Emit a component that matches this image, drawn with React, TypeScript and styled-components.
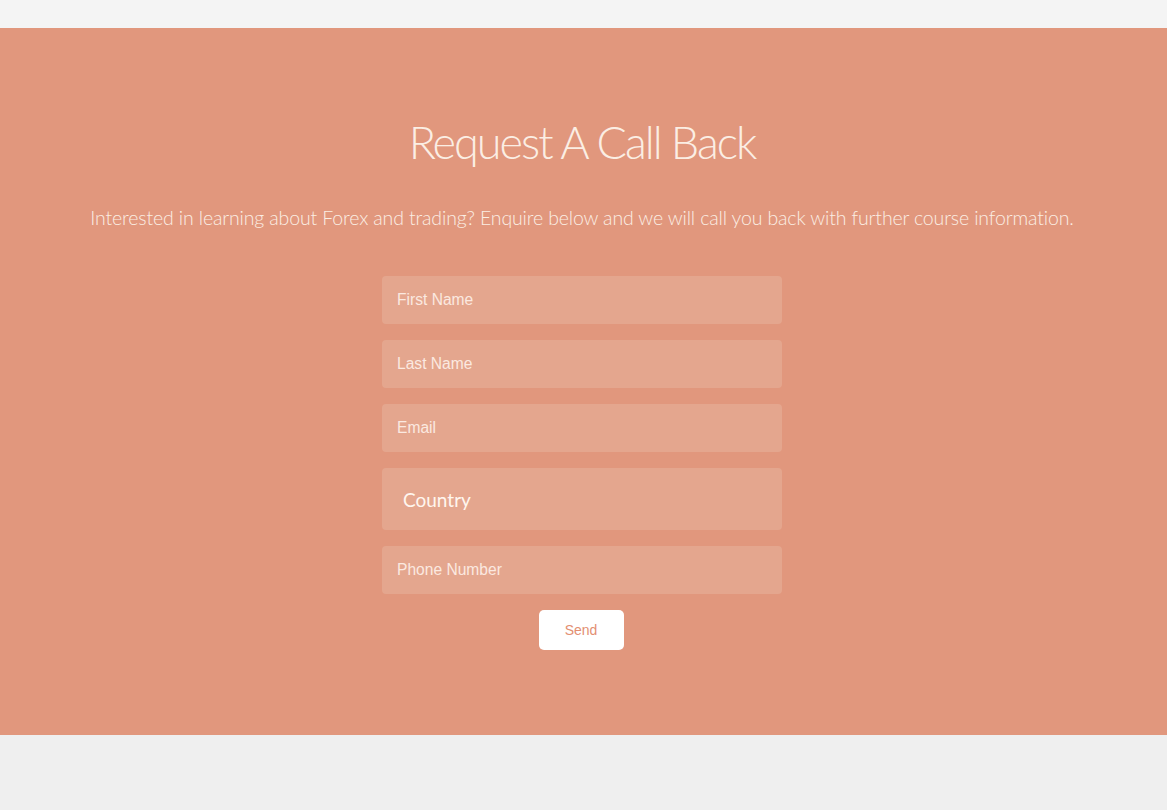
import React from "react";
import styled, { createGlobalStyle } from "styled-components";

const Global = createGlobalStyle`
  html, body { margin: 0; padding: 0; background: #efefef; }
  * { box-sizing: border-box; }
`;

const Page = styled.div`
  display: flex;
  flex-direction: column;
  min-height: 810px;
  background: #efefef;
`;

const TopBar = styled.div`
  height: 28px;
  background: #f4f4f4;
`;

const Section = styled.section`
  background: #e1977d;
  height: 707px;
  display: flex;
  flex-direction: column;
  align-items: center;
  padding: 84px 3px 0 0;
  font-family: Lato, "Open Sans", sans-serif;
`;

const Title = styled.h2`
  margin: 0;
  font-weight: 300;
  font-size: 45px;
  line-height: 60px;
  color: #fbeee4;
  letter-spacing: -2px;
`;

const Lead = styled.p`
  margin: 34px 0 0;
  font-weight: 300;
  font-size: 19.5px;
  line-height: 24px;
  letter-spacing: -0.14px;
  color: #fbeee4;
`;

const Form = styled.form`
  margin-top: 46px;
  width: 400px;
  display: flex;
  flex-direction: column;
  gap: 16px;
  align-items: center;
`;

const Field = styled.input`
  width: 400px;
  height: 48px;
  border: none;
  border-radius: 4px;
  background: #e4a68e;
  padding: 0 15px;
  font-family: "Liberation Sans", Arial, sans-serif;
  font-size: 15.6px;
  color: #fbe9e0;
  outline: none;
  &::placeholder { color: #fbe9e0; opacity: 1; }
`;

const Select = styled.div`
  width: 400px;
  height: 62px;
  border-radius: 4px;
  background: #e4a68e;
  display: flex;
  align-items: center;
  padding: 0 21px;
  font-family: Lato, "Open Sans", sans-serif;
  font-size: 19px;
  font-weight: 400;
  color: #fff6ee;
`;

const Send = styled.button`
  width: 85px;
  height: 40px;
  margin-right: 2px;
  border: none;
  border-radius: 5px;
  background: #ffffff;
  color: #e38f72;
  font-family: "Liberation Sans", Arial, sans-serif;
  font-size: 14px;
`;

export default function App() {
  return (
    <Page>
      <Global />
      <TopBar />
      <Section>
        <Title>Request A Call Back</Title>
        <Lead>
          Interested in learning about Forex and trading? Enquire below and we will call you back with further course information.
        </Lead>
        <Form onSubmit={(e) => e.preventDefault()}>
          <Field placeholder="First Name" />
          <Field placeholder="Last Name" />
          <Field placeholder="Email" />
          <Select>Country</Select>
          <Field placeholder="Phone Number" />
          <Send type="submit">Send</Send>
        </Form>
      </Section>
    </Page>
  );
}
